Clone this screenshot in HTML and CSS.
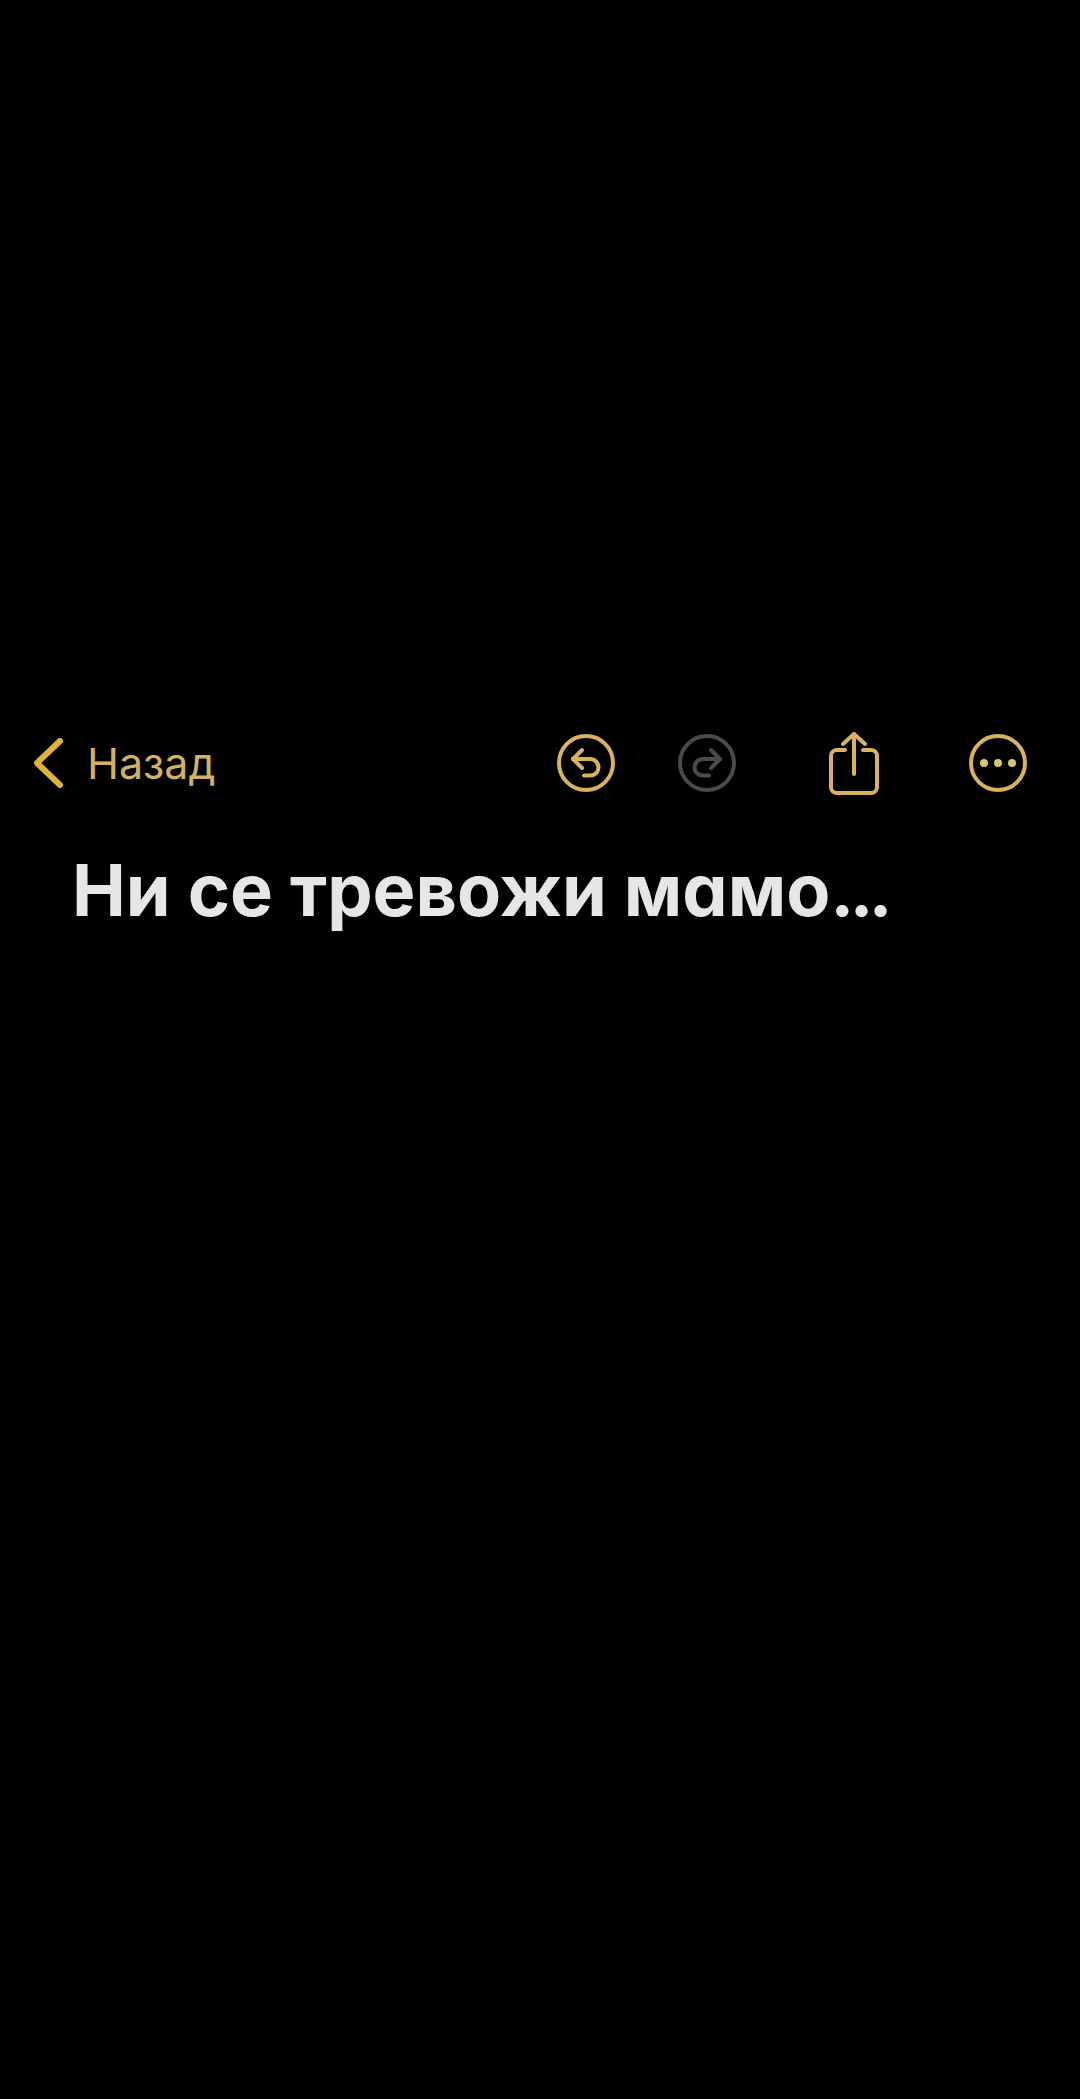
FILE: index.html
```html
<!DOCTYPE html>
<html lang="bg">
<head>
    <meta charset="UTF-8">
    <meta name="viewport" content="width=device-width, initial-scale=1.0">
    <title>Бележки</title>
    <link rel="stylesheet" href="styles.css">
</head>
<body>

<div class="container">
    <!-- Лента с бутони -->
    <div class="toolbar">
        <div class="back">
            <svg class="chevron" width="30" height="50" viewBox="0 0 30 50">
                <path d="M27 3 L4 25 L27 47" />
            </svg>
            <span class="back-label">Назад</span>
        </div>
        <div class="actions">
            <svg class="icon undo" width="58" height="58" viewBox="0 0 58 58">
                <circle cx="29" cy="29" r="27" />
                <path d="M25 16 L16 25 L25 34" />
                <path d="M16 25 H33 C38 25 41.500 29 41.500 33.500 C41.500 38 38 41.500 33 41.500 H27" />
            </svg>
            <svg class="icon redo" width="58" height="58" viewBox="0 0 58 58">
                <circle cx="29" cy="29" r="27" />
                <path d="M33 16 L42 25 L33 34" />
                <path d="M42 25 H25 C20 25 16.500 29 16.500 33.500 C16.500 38 20 41.500 25 41.500 H31" />
            </svg>
            <svg class="icon share" width="50" height="64" viewBox="0 0 50 64">
                <path d="M16 19 H8 C4.500 19 2 21.500 2 25 V56 C2 59.500 4.500 62 8 62 H42 C45.500 62 48 59.500 48 56 V25 C48 21.500 45.500 19 42 19 H34" />
                <path d="M25 43 V3" />
                <path d="M14 13 L25 3 L36 13" />
            </svg>
            <svg class="icon more" width="58" height="58" viewBox="0 0 58 58">
                <circle cx="29" cy="29" r="27" />
                <circle class="dot" cx="15" cy="29" r="4" />
                <circle class="dot" cx="29" cy="29" r="4" />
                <circle class="dot" cx="43" cy="29" r="4" />
            </svg>
        </div>
    </div>

    <h1>Ни се тревожи мамо<span class="dots">...</span></h1>
</div>

</body>
</html>
```

FILE: styles.css
```css
body {
    font-family: Inter, "Liberation Sans", sans-serif;
    background-color: #000;
    margin: 0;
    padding: 0;
}
.container {
    min-height: 2099px;
    box-sizing: border-box;
    padding-top: 730px;
}
.toolbar {
    display: flex;
    align-items: center;
    justify-content: space-between;
    height: 66px;
    padding: 0 53px 0 33px;
}
.back {
    display: flex;
    align-items: center;
    gap: 24px;
}
.back-label {
    color: #d3b163;
    font-size: 43px;
    line-height: 50px;
}
.chevron path {
    fill: none;
    stroke: #e0b338;
    stroke-width: 6;
    stroke-linecap: round;
    stroke-linejoin: round;
}
.actions {
    display: flex;
    align-items: center;
}
.icon {
    fill: none;
    stroke: #d9b25f;
    stroke-width: 4;
    stroke-linecap: round;
    stroke-linejoin: round;
}
.undo {
    margin-right: 63px;
}
.redo {
    stroke: #4a4a4a;
    margin-right: 93px;
}
.share {
    margin-right: 90px;
}
.dot {
    fill: #d9c46f;
    stroke: none;
}
h1 {
    margin: 52px 0 0 72px;
    color: #e6e6e6;
    font-size: 72px;
    line-height: 84px;
    font-weight: 700;
    font-feature-settings: "cv11";
}
.dots {
    letter-spacing: -5px;
}
```
